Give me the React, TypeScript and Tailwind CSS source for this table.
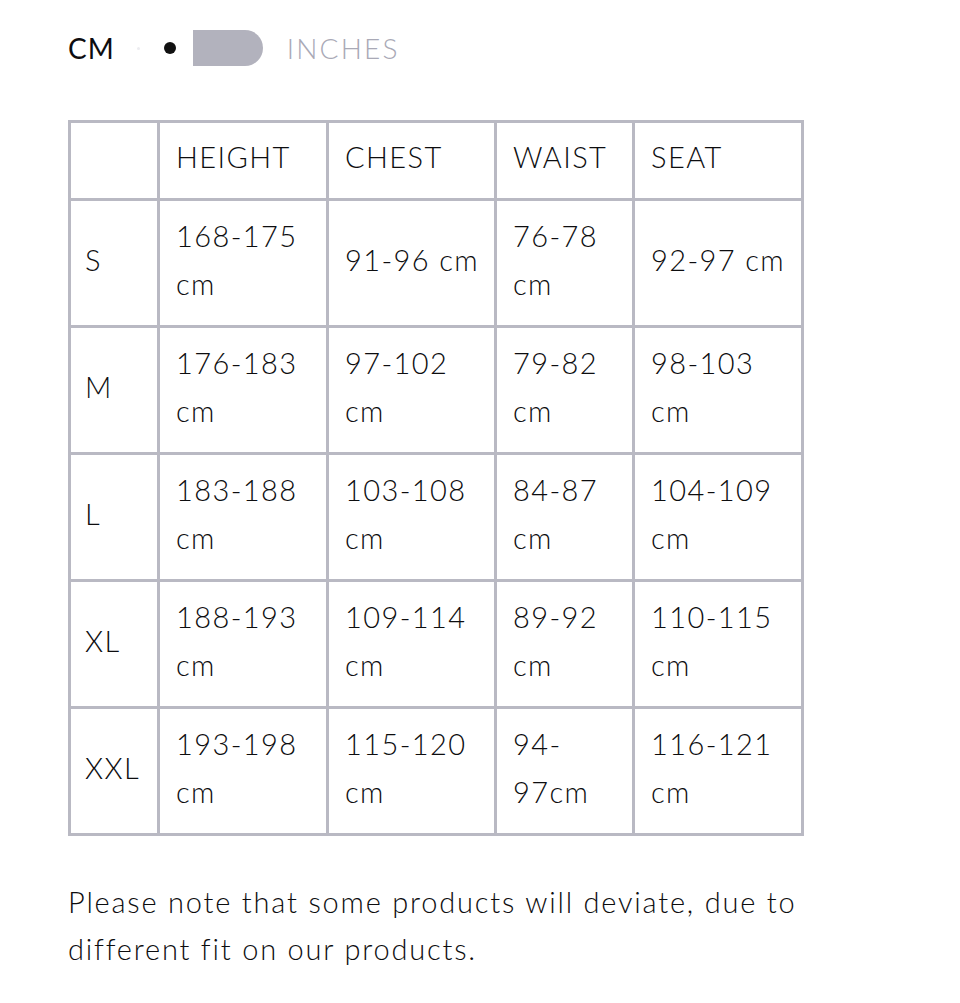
import React from 'react'

const rows = [
  { size: 'S', cells: ['168-175 cm', '91-96 cm', '76-78 cm', '92-97 cm'] },
  { size: 'M', cells: ['176-183 cm', '97-102 cm', '79-82 cm', '98-103 cm'] },
  { size: 'L', cells: ['183-188 cm', '103-108 cm', '84-87 cm', '104-109 cm'] },
  { size: 'XL', cells: ['188-193 cm', '109-114 cm', '89-92 cm', '110-115 cm'] },
  { size: 'XXL', cells: ['193-198 cm', '115-120 cm', '94-97cm', '116-121 cm'] },
]

const headers = ['HEIGHT', 'CHEST', 'WAIST', 'SEAT']
const widths = ['w-[89px]', 'w-[169px]', 'w-[168px]', 'w-[138px]', 'w-[169px]']

export default function App() {
  return (
    <div className="min-h-screen bg-white text-[#0d0d0f] font-['Lato','Noto_Sans',sans-serif] font-light tracking-[1.4px]">
      <div className="pl-[68px] pt-[28px]">
        <div className="flex items-center h-[40px]">
          <span className="text-[28px] leading-none font-normal tracking-[1px]">CM</span>
          <span className="ml-[22px] w-[3px] h-[3px] rounded-full bg-[#ececf0]" />
          <span className="ml-[24px] w-[12px] h-[12px] rounded-full bg-[#111]" />
          <span className="ml-[17px] w-[70px] h-[36px] rounded-r-full rounded-l-[6px] bg-[#b2b2bd]" />
          <span className="ml-[24px] text-[28px] leading-none text-[#a9a9b6] tracking-[2.2px]">INCHES</span>
        </div>

        <table className="mt-[52px] border-collapse table-fixed w-[733px] text-[29px]">
          <colgroup>
            {widths.map((w, i) => (
              <col key={i} className={w} />
            ))}
          </colgroup>
          <thead>
            <tr className="h-[78px]">
              <th className="border-[3px] border-[#b9b9c3]" />
              {headers.map((h) => (
                <th
                  key={h}
                  className="border-[3px] border-[#b9b9c3] pl-[16px] pb-[8px] text-left font-light align-middle"
                >
                  {h}
                </th>
              ))}
            </tr>
          </thead>
          <tbody>
            {rows.map((r) => (
              <tr key={r.size} className="h-[127px]">
                <td className="border-[3px] border-[#b9b9c3] pl-[14px] pb-[6px] align-middle">{r.size}</td>
                {r.cells.map((c, i) => (
                  <td
                    key={i}
                    className="border-[3px] border-[#b9b9c3] pl-[16px] pr-[8px] pb-[6px] align-middle leading-[48px]"
                  >
                    {c}
                  </td>
                ))}
              </tr>
            ))}
          </tbody>
        </table>

        <p className="mt-[42px] w-[790px] text-[29px] leading-[47px] tracking-[1.8px]">
          Please note that some products will deviate, due to different fit on our products.
        </p>
      </div>
    </div>
  )
}
